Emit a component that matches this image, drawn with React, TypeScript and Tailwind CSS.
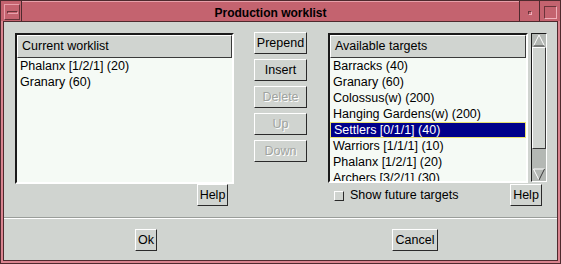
import React from "react";

const font = { fontFamily: '"Liberation Sans", Arial, sans-serif' };

const worklist = ["Phalanx [1/2/1] (20)", "Granary (60)"];

const targets = [
    "Barracks (40)",
    "Granary (60)",
    "Colossus(w) (200)",
    "Hanging Gardens(w) (200)",
    "Settlers [0/1/1] (40)",
    "Warriors [1/1/1] (10)",
    "Phalanx [1/2/1] (20)",
    "Archers [3/2/1] (30)",
];

function Button({
    label,
    disabled,
    className,
}: {
    label: string;
    disabled?: boolean;
    className?: string;
}) {
    return (
        <div
            className={
                "flex items-center justify-center h-[22px] bg-[#d0d4d0] border border-t-white border-l-white border-r-[#2a2a2a] border-b-[#2a2a2a] text-[12.5px] leading-none " +
                (disabled
                    ? "text-[#a0a4a0] [text-shadow:1px_1px_0_#ffffff] "
                    : "text-black ") +
                (className ?? "")
            }
        >
            {label}
        </div>
    );
}

function ListHeader({ label }: { label: string }) {
    return (
        <div className="h-[23px] shrink-0 flex items-center pl-[4px] bg-[#d0d4d0] border border-t-white border-l-white border-r-[#3a3a3a] border-b-[#3a3a3a] text-[12.5px] text-black">
            {label}
        </div>
    );
}

function Arrow({ up }: { up?: boolean }) {
    return (
        <svg width="14" height="13" viewBox="0 0 14 13" className="shrink-0">
            {up ? (
                <>
                    <polyline points="1.5,12 7,1 12.5,12" fill="none" stroke="#ffffff" strokeWidth="1" />
                    <line x1="1.5" y1="12" x2="12.5" y2="12" stroke="#3a3a3a" strokeWidth="1" />
                </>
            ) : (
                <>
                    <line x1="1.5" y1="1" x2="12.5" y2="1" stroke="#ffffff" strokeWidth="1" />
                    <polyline points="1.5,1 7,12" fill="none" stroke="#ffffff" strokeWidth="1" />
                    <polyline points="7,12 12.5,1" fill="none" stroke="#3a3a3a" strokeWidth="1" />
                </>
            )}
        </svg>
    );
}

export default function App() {
    return (
        <div
            className="w-[561px] h-[264px] bg-[#d9848f] border border-[#4e2a2e] flex flex-col overflow-hidden"
            style={font}
        >
            {/* title bar */}
            <div className="h-[20px] shrink-0 flex bg-[#c4636f]">
                <div className="w-[21px] shrink-0 flex items-center justify-center pl-[2px] pt-[2px] border-r border-[#4e2a2e]">
                    <div className="w-[16px] h-[16px] border border-t-[#e8a0aa] border-l-[#e8a0aa] border-r-[#6a343a] border-b-[#6a343a] flex items-center justify-center">
                        <div className="w-[11px] h-[3px] border border-t-[#6a343a] border-l-[#6a343a] border-r-[#e8a0aa] border-b-[#e8a0aa]" />
                    </div>
                </div>
                <div className="flex-1 flex items-center justify-center pt-[3px] text-[12px] font-bold text-black border-t border-[#e8a0aa]">
                    Production worklist
                </div>
                <div className="w-[20px] shrink-0 border-l border-[#4e2a2e] flex items-center justify-center pt-[4px]">
                    <div className="w-[4px] h-[4px] border border-t-[#6a343a] border-l-[#6a343a] border-r-[#f0b0ba] border-b-[#f0b0ba]" />
                </div>
                <div className="w-[21px] shrink-0 border-l border-[#4e2a2e] flex items-center justify-center pt-[3px]">
                    <div className="w-[13px] h-[13px] border border-t-[#6a343a] border-l-[#6a343a] border-r-[#f0b0ba] border-b-[#f0b0ba]" />
                </div>
            </div>

            {/* body */}
            <div className="flex-1 flex flex-col mx-[2px] mb-[2px] bg-[#d0d4d0] border border-[#4e2a2e]">
                <div className="h-[195px] shrink-0 flex pt-[11px] pl-[11px]">
                    {/* current worklist */}
                    <div className="w-[219px] flex flex-col">
                        <div className="h-[151px] flex flex-col border-2 border-t-[#1a1a1a] border-l-[#1a1a1a] border-r-white border-b-white bg-[#f5faf5]">
                            <ListHeader label="Current worklist" />
                            <div className="flex flex-col text-[12.5px] text-black">
                                {worklist.map(function (item) {
                                    return (
                                        <div key={item} className="h-[16px] flex items-center pl-[3px]">
                                            {item}
                                        </div>
                                    );
                                })}
                            </div>
                        </div>
                        <div className="flex justify-end pr-[6px] mt-[0px]">
                            <Button label="Help" className="w-[31px]" />
                        </div>
                    </div>

                    {/* middle buttons */}
                    <div className="w-[53px] ml-[20px] -mt-[1px] flex flex-col gap-[5px]">
                        <Button label="Prepend" />
                        <Button label="Insert" />
                        <Button label="Delete" disabled />
                        <Button label="Up" disabled />
                        <Button label="Down" disabled />
                    </div>

                    {/* available targets */}
                    <div className="w-[219px] ml-[21px] flex flex-col">
                        <div className="flex gap-[3px]">
                            <div className="w-[202px] h-[150px] flex flex-col border-2 border-t-[#1a1a1a] border-l-[#1a1a1a] border-r-white border-b-white bg-[#f5faf5] overflow-hidden">
                                <ListHeader label="Available targets" />
                                <div className="flex flex-col text-[12.5px] text-black">
                                    {targets.map(function (item, index) {
                                        const selected = index === 4;
                                        return (
                                            <div
                                                key={item}
                                                className={
                                                    "h-[16px] shrink-0 flex items-center pl-[3px] whitespace-nowrap " +
                                                    (selected
                                                        ? "bg-[#00008a] text-white border border-[#e8e070] pl-[2px]"
                                                        : "")
                                                }
                                            >
                                                {item}
                                            </div>
                                        );
                                    })}
                                </div>
                            </div>
                            <div className="w-[16px] h-[149px] flex flex-col border border-t-[#1a1a1a] border-l-[#1a1a1a] border-r-white border-b-white bg-[#b4b8b4]">
                                <Arrow up />
                                <div className="h-[102px] shrink-0 bg-[#d0d4d0] border border-t-white border-l-white border-r-[#3a3a3a] border-b-[#3a3a3a]" />
                                <div className="flex-1" />
                                <Arrow />
                            </div>
                        </div>
                        <div className="flex items-center mt-[1px]">
                            <div className="w-[10px] h-[10px] ml-[6px] mt-[1px] bg-[#d0d4d0] border border-t-white border-l-white border-r-[#2a2a2a] border-b-[#2a2a2a]" />
                            <span className="ml-[6px] text-[12.5px] text-black">Show future targets</span>
                            <div className="flex-1" />
                            <Button label="Help" className="w-[32px] mr-[5px]" />
                        </div>
                    </div>
                </div>

                {/* separator */}
                <div className="h-[2px] shrink-0 border-t border-[#9a9e9a] bg-white" />

                {/* bottom buttons */}
                <div className="flex pt-[10px]">
                    <Button label="Ok" className="w-[22px] ml-[131px]" />
                    <Button label="Cancel" className="w-[46px] ml-[235px]" />
                </div>
            </div>
        </div>
    );
}
